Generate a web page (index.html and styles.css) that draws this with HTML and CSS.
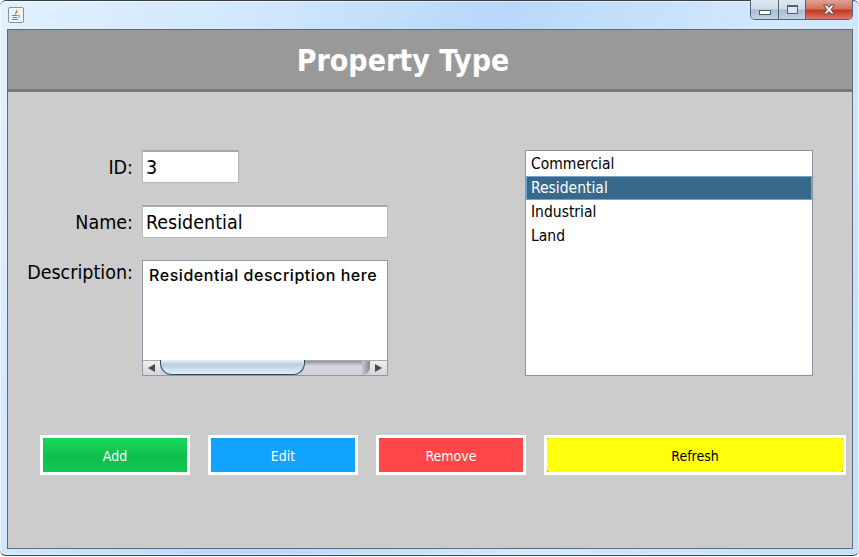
FILE: index.html
```html
<!DOCTYPE html>
<html lang="en">

<head>
    <meta charset="UTF-8">
    <title>Property Type</title>
    <link rel="stylesheet" href="styles.css">
</head>

<body>
    <div class="window">
        <div class="titlebar">
            <svg class="app-icon" width="16" height="16" viewBox="0 0 16 16">
                <rect x="0.5" y="0.5" width="15" height="15" rx="1.5" fill="#f1f5fa" stroke="#7f93a8" />
                <path d="M8.5 2 C9.5 4 6.5 5 7 7 C7.3 7.8 8 8 8 8 C7.5 6.5 10.5 6 9.5 3.5 Z" fill="#e8792a" />
                <path d="M4 8.5 H9.5 M4.5 10.5 H9 M4 12.5 H10" stroke="#5f87a8" stroke-width="1" fill="none" />
                <path d="M10 8.3 C12.5 8 12 10.5 9.8 10.8" stroke="#5f87a8" stroke-width="1" fill="none" />
            </svg>
            <div class="caption">
                <div class="cap-btn cap-min"><span class="min-glyph"></span></div>
                <div class="cap-btn cap-max"><span class="max-glyph"></span></div>
                <div class="cap-btn cap-close">
                    <svg width="16" height="11" viewBox="0 0 16 11">
                        <path d="M2.5 1 H6 L8 3.4 L10 1 H13.5 L10 5.5 L13.5 10 H10 L8 7.6 L6 10 H2.5 L6 5.5 Z" fill="#f2f2f2" stroke="#5c4a4a" stroke-width="1" />
                    </svg>
                </div>
            </div>
        </div>

        <div class="panel">
            <div class="header">Property Type</div>

            <div class="content">
                <div class="form">
                    <div class="row">
                        <label class="label">ID:</label>
                        <div class="field field-id">3</div>
                    </div>
                    <div class="row">
                        <label class="label">Name:</label>
                        <div class="field field-name">Residential</div>
                    </div>
                    <div class="row row-top">
                        <label class="label">Description:</label>
                        <div class="textarea">
                            <div class="textarea-text">Residential description here</div>
                            <div class="scrollbar">
                                <div class="arrow"><span class="arrow-left"></span></div>
                                <div class="track">
                                    <div class="thumb"></div>
                                    <div class="track-end"></div>
                                </div>
                                <div class="arrow"><span class="arrow-right"></span></div>
                            </div>
                        </div>
                    </div>
                </div>

                <div class="list">
                    <div class="item">Commercial</div>
                    <div class="item selected">Residential</div>
                    <div class="item">Industrial</div>
                    <div class="item">Land</div>
                </div>
            </div>

            <div class="buttons">
                <button class="btn"><span class="btn-face green">Add</span></button>
                <button class="btn"><span class="btn-face blue">Edit</span></button>
                <button class="btn"><span class="btn-face red">Remove</span></button>
                <button class="btn btn-wide"><span class="btn-face yellow">Refresh</span></button>
            </div>
        </div>
    </div>
</body>

</html>
```

FILE: styles.css
```css
* {
    box-sizing: border-box;
}

html,
body {
    margin: 0;
    height: 100%;
    overflow: hidden;
}

body {
    background: #fff;
    font-family: "DejaVu Sans Condensed", "DejaVu Sans", sans-serif;
    font-stretch: condensed;
    color: #000;
}

.window {
    width: 859px;
    height: 556px;
    padding: 0 6px 6px 7px;
    display: flex;
    flex-direction: column;
    background: linear-gradient(115deg, #e3f1ff 0%, #cfe6fd 25%, #b7d8fa 45%, #d3e8fd 70%, #c4e0fb 100%);
    border-top: 1px solid #3a3f44;
    border-bottom: 1px solid #3a3f44;
    border-radius: 6px;
    box-shadow: inset 0 0 0 1px rgba(255, 255, 255, 0.5);
}

.titlebar {
    height: 28px;
    flex-shrink: 0;
    display: flex;
    justify-content: space-between;
    align-items: flex-start;
}

.app-icon {
    margin: 6px 0 0 1px;
}

.caption {
    display: flex;
    height: 20px;
    margin-top: -1px;
    width: 103px;
    border: 1px solid #56636f;
    border-top: none;
    border-radius: 0 0 5px 5px;
    overflow: hidden;
    background: #c3d4e6;
}

.cap-btn {
    display: flex;
    align-items: center;
    justify-content: center;
}

.cap-min,
.cap-max {
    width: 28px;
    background: linear-gradient(#dde8f3 0%, #ccdaea 48%, #a7bbd0 52%, #c2d3e5 100%);
    border-right: 1px solid #56636f;
}

.cap-max {
    width: 27px;
}

.cap-close {
    flex: 1;
    background: linear-gradient(#e0a097 0%, #d2735f 45%, #c2391f 55%, #d9786a 100%);
}

.min-glyph {
    display: block;
    width: 12px;
    height: 5px;
    margin-top: 6px;
    background: #fff;
    border: 1px solid #4e5a68;
}

.max-glyph {
    display: block;
    width: 11px;
    height: 9px;
    border: 1px solid #56616f;
    border-top-width: 2px;
    background: #dce6f1;
    box-shadow: inset 0 0 0 1px #dce6f1;
}

.panel {
    flex: 1;
    display: flex;
    flex-direction: column;
    background: #cccccc;
    border: 1px solid #5f6c78;
}

.header {
    height: 62px;
    flex-shrink: 0;
    padding: 2px 54px 0 0;
    background: #999999;
    border-bottom: 3px solid #777777;
    color: #fff;
    font-size: 30px;
    font-weight: bold;
    display: flex;
    align-items: center;
    justify-content: center;
}

.content {
    display: flex;
    padding-top: 58px;
}

.form {
    display: flex;
    flex-direction: column;
    gap: 22px;
}

.row {
    display: flex;
    align-items: center;
    gap: 9px;
}

.row-top {
    align-items: flex-start;
}

.label {
    width: 125px;
    padding-top: 1px;
    text-align: right;
    font-size: 19.5px;
    white-space: nowrap;
}

.field {
    height: 33px;
    padding: 1px 3px 0;
    background: #fff;
    border: 1px solid #b8b8b8;
    border-top: 2px solid #a8a8a8;
    font-size: 19.5px;
    line-height: 29px;
}

.field-id {
    width: 97px;
}

.field-name {
    width: 246px;
}

.textarea {
    width: 246px;
    height: 116px;
    display: flex;
    flex-direction: column;
    background: #fff;
    border: 1px solid #8d97a5;
}

.textarea-text {
    flex: 1;
    padding: 4px 0 0 6px;
    font-family: "Inter", sans-serif;
    font-size: 16px;
    font-weight: 500;
    letter-spacing: 0.55px;
    white-space: nowrap;
}

.scrollbar {
    height: 15px;
    display: flex;
    background: #d5d7dc;
    border-top: 1px solid #a9acb3;
}

.arrow {
    width: 17px;
    flex-shrink: 0;
    display: flex;
    align-items: center;
    justify-content: center;
    background: linear-gradient(#eef0f3, #d4d6db);
}

.arrow-left {
    border-top: 4px solid transparent;
    border-bottom: 4px solid transparent;
    border-right: 7px solid #4a4a4a;
}

.arrow-right {
    border-top: 4px solid transparent;
    border-bottom: 4px solid transparent;
    border-left: 7px solid #4a4a4a;
}

.track {
    flex: 1;
    display: flex;
    justify-content: space-between;
    background: linear-gradient(#8f9196 0%, #d6d7dc 35%, #d0d1d6 100%);
}

.thumb {
    width: 145px;
    margin-top: -1px;
    background: linear-gradient(#e8f1f8 0%, #b6cfe0 35%, #c9dfee 60%, #e2eff8 100%);
    border: 1px solid #2c4a64;
    border-top: none;
    border-radius: 0 0 12px 12px;
}

.track-end {
    width: 8px;
    background: linear-gradient(90deg, #c9cace, #85878c);
    border-radius: 0 0 8px 0;
}

.list {
    width: 288px;
    height: 226px;
    padding: 1px 0;
    margin-left: 137px;
    background: #fff;
    border: 1px solid #8d93a2;
}

.item {
    height: 24px;
    padding: 1px 5px 0;
    font-size: 15.5px;
    line-height: 23px;
}

.item.selected {
    background: #39698a;
    color: #fff;
    border: 1px solid #73a4d1;
    padding: 1px 4px 0;
    line-height: 21px;
}

.buttons {
    display: flex;
    gap: 18px;
    padding: 59px 0 0 32px;
}

.btn {
    width: 150px;
    height: 40px;
    padding: 0;
    background: #6f6f7a;
    border: 3px solid #fff;
    font: inherit;
    display: flex;
}

.btn-wide {
    width: 302px;
}

.btn-face {
    flex: 1;
    border-radius: 2px;
    font-size: 14px;
    line-height: 36px;
    text-align: center;
    color: #fff;
}

.green {
    background: linear-gradient(#1bd85c 0%, #0fbe4d 55%, #12c855 100%);
}

.blue {
    background: #12a2ff;
}

.red {
    background: #ff4747;
}

.yellow {
    background: #ffff0d;
    color: #000;
}
```
